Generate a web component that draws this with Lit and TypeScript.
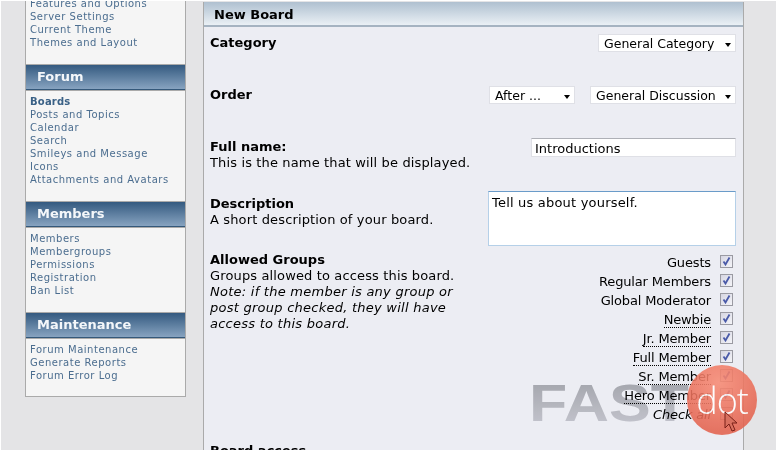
import { css, html, LitElement, svg } from 'lit';
import { customElement } from 'lit/decorators.js';

interface Section {
  title: string;
  links: { label: string; active?: boolean }[];
}

const SECTIONS: Section[] = [
  {
    title: 'Forum',
    links: [
      { label: 'Boards', active: true },
      { label: 'Posts and Topics' },
      { label: 'Calendar' },
      { label: 'Search' },
      { label: 'Smileys and Message Icons' },
      { label: 'Attachments and Avatars' },
    ],
  },
  {
    title: 'Members',
    links: [
      { label: 'Members' },
      { label: 'Membergroups' },
      { label: 'Permissions' },
      { label: 'Registration' },
      { label: 'Ban List' },
    ],
  },
  {
    title: 'Maintenance',
    links: [{ label: 'Forum Maintenance' }, { label: 'Generate Reports' }, { label: 'Forum Error Log' }],
  },
];

const TOP_LINKS = ['Features and Options', 'Server Settings', 'Current Theme', 'Themes and Layout'];

const GROUPS = [
  { name: 'Guests' },
  { name: 'Regular Members' },
  { name: 'Global Moderator' },
  { name: 'Newbie', post: true },
  { name: 'Jr. Member', post: true },
  { name: 'Full Member', post: true },
  { name: 'Sr. Member', post: true },
  { name: 'Hero Member', post: true },
];

const checkbox = (checked = true) => html`
  <span class="box">
    ${checked
      ? html`<svg width="9" height="9" viewBox="0 0 9 9">
          <path d="M1.5 4.5 L3.5 7.5 L7.5 0.5" fill="none" stroke="#4a5aa8" stroke-width="1.8" />
        </svg>`
      : ''}
  </span>
`;

const cursor = svg`<path d="M1 1 L1 17 L5 13 L8 20 L11 19 L8 12 L13 12 Z" fill="#d8705f" stroke="#7a2018" stroke-width="1" />`;

@customElement('app-root')
export class AppRoot extends LitElement {
  static override styles = css`
    :host {
      display: block;
      width: 776px;
      height: 450px;
      position: relative;
      overflow: hidden;
      background: #fff;
      font-family: 'DejaVu Sans', Verdana, sans-serif;
      color: #000;
    }
    .page {
      display: flex;
      align-items: flex-start;
      gap: 17px;
      height: 449px;
      margin: 1px 0 0 1px;
      padding-left: 24px;
      background: #e4e4e6;
      overflow: hidden;
    }
    .sidebar {
      flex: none;
      width: 159px;
      margin-top: -9px;
      border: 1px solid #aaa;
      background: #f5f5f5;
      font-size: 10px;
      line-height: 13px;
      letter-spacing: 0.52px;
    }
    .links {
      margin: 0;
      padding: 4px 12px 15px 4px;
      list-style: none;
      color: #4b6d8f;
    }
    .links:last-child {
      padding-bottom: 14px;
    }
    .links li.active {
      font-weight: bold;
      color: #3a6186;
      letter-spacing: 0.2px;
    }
    .side-title {
      height: 24px;
      padding-left: 11px;
      border-top: 1px solid #aaa;
      border-bottom: 1px solid #34587a;
      box-shadow: 0 1px 0 #aaa;
      margin-bottom: 1px;
      background: linear-gradient(#345a80, #87a3c0);
      color: #f4f7fa;
      font-size: 13px;
      font-weight: bold;
      line-height: 24px;
      letter-spacing: 0;
    }
    .main {
      flex: none;
      width: 539px;
      height: 460px;
      margin-top: 1px;
      border: solid #aaa;
      border-width: 0 1px;
      background: #ecedf3;
    }
    .main-title {
      height: 23px;
      padding-left: 10px;
      border-bottom: 2px solid #a5b3c1;
      background: linear-gradient(#afc0d0, #eaf0f5);
      font-size: 13px;
      font-weight: bold;
      line-height: 26px;
    }
    .form {
      display: flex;
      flex-direction: column;
      padding: 7px 7px 0 6px;
      font-size: 13px;
      line-height: 16px;
      letter-spacing: 0.14px;
    }
    .row {
      display: flex;
      justify-content: space-between;
      align-items: flex-start;
    }
    .r1,
    .r2 {
      height: 52px;
    }
    .r3 {
      height: 53px;
    }
    .r4 {
      height: 61px;
    }
    .r5 {
      height: 191px;
    }
    .desc b {
      display: block;
      letter-spacing: 0;
    }
    .r1 .desc,
    .r2 .desc,
    .r3 .desc {
      padding-top: 1px;
    }
    .r4 .desc {
      padding-top: 5px;
    }
    .r5 .desc {
      width: 262px;
    }
    .r5 .desc i {
      letter-spacing: 0.25px;
    }
    .pair {
      display: flex;
      gap: 15px;
    }
    .select {
      position: relative;
      display: block;
      box-sizing: border-box;
      height: 18px;
      padding: 0 5px;
      border: 1px solid #dfe0e6;
      background: #fff;
      font-size: 12.5px;
      line-height: 18px;
      white-space: nowrap;
      letter-spacing: 0;
    }
    .select::after {
      content: '';
      position: absolute;
      right: 4px;
      top: 8px;
      border: 3px solid transparent;
      border-top: 4px solid #000;
      border-bottom: 0;
    }
    .s-cat {
      width: 138px;
    }
    .s-after {
      width: 86px;
    }
    .s-disc {
      width: 146px;
    }
    input,
    textarea {
      display: block;
      box-sizing: border-box;
      margin: 0;
      background: #fff;
      font: inherit;
      letter-spacing: 0;
      color: #000;
      outline: none;
      resize: none;
    }
    input {
      width: 205px;
      height: 19px;
      padding: 2px 3px 0;
      border: 1px solid #dfe0e6;
      border-top-color: #aeb0b6;
    }
    textarea {
      width: 248px;
      height: 55px;
      padding: 3px;
      border: 1px solid #b5d0e8;
      border-top-color: #6a9bc9;
      letter-spacing: 0.2px;
    }
    .groups {
      display: flex;
      flex-direction: column;
      align-items: flex-end;
      padding: 1px 3px 0 0;
      letter-spacing: -0.15px;
    }
    .groups label {
      display: flex;
      align-items: center;
      gap: 9px;
      height: 19px;
    }
    .post {
      border-bottom: 1px dotted #000;
      line-height: 15px;
    }
    .box {
      box-sizing: border-box;
      display: flex;
      align-items: center;
      justify-content: center;
      width: 13px;
      height: 13px;
      margin-top: -3px;
      border: 1px solid #9a9aa2;
      background: linear-gradient(135deg, #d6d6e2, #f4f4f8);
    }
    .logo {
      position: absolute;
      left: 527px;
      top: 383px;
      mix-blend-mode: multiply;
    }
    .dot {
      position: absolute;
      left: 687px;
      top: 365px;
      width: 70px;
      height: 70px;
      border-radius: 50%;
      background: radial-gradient(circle at 45% 25%, #f88b75, #e4634f 75%);
      opacity: 0.88;
      display: flex;
      align-items: center;
      justify-content: center;
      color: #fff;
      font-family: 'Open Sans', sans-serif;
      font-weight: 300;
      font-size: 36px;
      letter-spacing: -1px;
    }
    .cursor {
      position: absolute;
      left: 724px;
      top: 411px;
    }
  `;

  override render() {
    return html`
      <div class="page">
        <nav class="sidebar">
          <ul class="links">
            ${TOP_LINKS.map((l) => html`<li>${l}</li>`)}
          </ul>
          ${SECTIONS.map(
            (s) => html`
              <div class="side-title">${s.title}</div>
              <ul class="links">
                ${s.links.map((l) => html`<li class=${l.active ? 'active' : ''}>${l.label}</li>`)}
              </ul>
            `,
          )}
        </nav>
        <main class="main">
          <div class="main-title">New Board</div>
          <div class="form">
            <div class="row r1">
              <div class="desc"><b>Category</b></div>
              <span class="select s-cat">General Category</span>
            </div>
            <div class="row r2">
              <div class="desc"><b>Order</b></div>
              <div class="pair">
                <span class="select s-after">After ...</span>
                <span class="select s-disc">General Discussion</span>
              </div>
            </div>
            <div class="row r3">
              <div class="desc"><b>Full name:</b>This is the name that will be displayed.</div>
              <input value="Introductions" />
            </div>
            <div class="row r4">
              <div class="desc"><b>Description</b>A short description of your board.</div>
              <textarea>Tell us about yourself.</textarea>
            </div>
            <div class="row r5">
              <div class="desc">
                <b>Allowed Groups</b>Groups allowed to access this board.<br />
                <i>Note: if the member is any group or post group checked, they will have access to this board.</i>
              </div>
              <div class="groups">
                ${GROUPS.map(
                  (g) => html`<label><span class=${g.post ? 'post' : ''}>${g.name}</span>${checkbox()}</label>`,
                )}
                <label><i>Check all</i>${checkbox(false)}</label>
              </div>
            </div>
            <div class="desc"><b>Board access</b></div>
          </div>
        </main>
      </div>
      <svg class="logo" width="175" height="46" viewBox="0 0 175 46">
        <defs>
          <linearGradient id="fast" x1="0" y1="0" x2="0" y2="1">
            <stop offset="0" stop-color="#acadb0" />
            <stop offset="1" stop-color="#d8d8dc" />
          </linearGradient>
        </defs>
        <text
          x="2"
          y="38"
          font-family="Liberation Sans"
          font-weight="bold"
          font-size="52"
          textLength="160"
          lengthAdjust="spacingAndGlyphs"
          fill="url(#fast)"
        >FAST</text>
      </svg>
      <div class="dot">dot</div>
      <svg class="cursor" width="16" height="22" viewBox="0 0 16 22">${cursor}</svg>
    `;
  }
}
